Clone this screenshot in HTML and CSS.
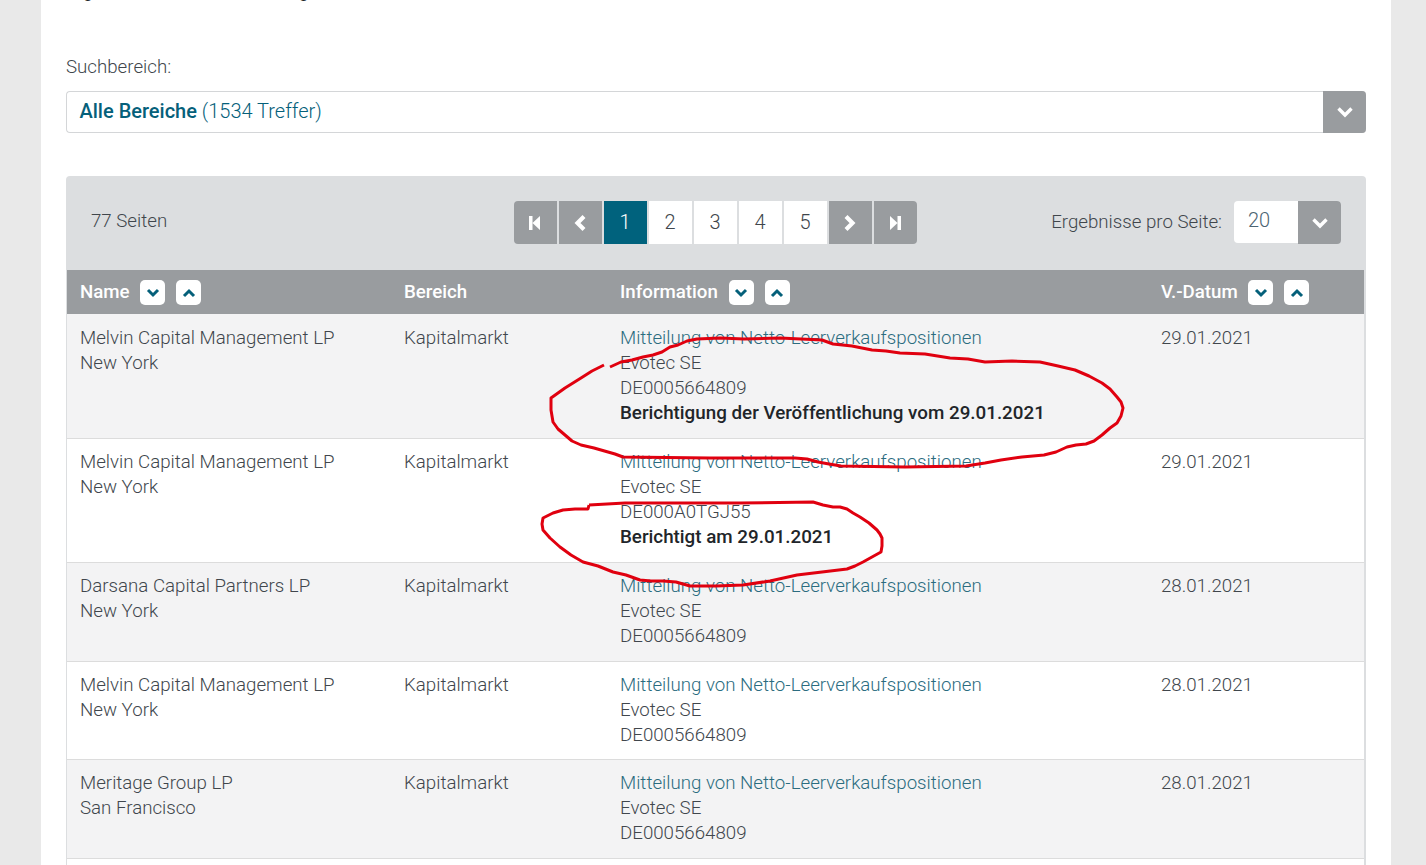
FILE: index.html
```html
<!DOCTYPE html>
<html lang="de">
<head>
<meta charset="utf-8">
<title>Suche</title>
<link rel="stylesheet" href="styles.css">
</head>
<body>
<main class="page">
  <p class="clipped-title">Ergebnisse für Ihren Suchbegriff</p>
  <label class="field-label">Suchbereich:</label>
  <div class="select select-wide">
    <div class="select-value"><strong>Alle Bereiche</strong> (1534 Treffer)</div>
    <div class="select-btn"><svg class="chev-lg" viewBox="0 0 18 12"><path d="M2.500 2.500 9 9l6.500-6.500"/></svg></div>
  </div>

  <section class="panel">
    <div class="toolbar">
      <div class="pages-count">77 Seiten</div>
      <nav class="pager">
        <a class="pg pg-grey pg-first"><svg class="pg-icon" viewBox="0 0 12 14"><path class="fill" d="M0 0h3.500v14H0zM3.500 7 11 0v14z"/></svg></a>
        <a class="pg pg-grey"><svg class="pg-icon" viewBox="0 0 12 18"><path d="M10 2.500 3.500 9l6.500 6.500"/></svg></a>
        <a class="pg pg-active">1</a>
        <a class="pg">2</a>
        <a class="pg">3</a>
        <a class="pg">4</a>
        <a class="pg">5</a>
        <a class="pg pg-grey"><svg class="pg-icon" viewBox="0 0 12 18"><path d="M2 2.500 8.500 9 2 15.500"/></svg></a>
        <a class="pg pg-grey pg-last"><svg class="pg-icon" viewBox="0 0 12 14"><path class="fill" d="M12 0H8.500v14H12zM8.500 7 1 0v14z"/></svg></a>
      </nav>
      <div class="per-page">
        <span>Ergebnisse pro Seite:</span>
        <div class="select select-small">
          <div class="select-value">20</div>
          <div class="select-btn"><svg class="chev-lg" viewBox="0 0 18 12"><path d="M2.500 2.500 9 9l6.500-6.500"/></svg></div>
        </div>
      </div>
    </div>

    <div class="table">
      <div class="row head">
        <div class="cell">Name <span class="sort"><svg viewBox="0 0 14 10"><path d="M2 2l5 5 5-5"/></svg></span><span class="sort"><svg viewBox="0 0 14 10"><path d="M2 8l5-5 5 5"/></svg></span></div>
        <div class="cell">Bereich</div>
        <div class="cell">Information <span class="sort"><svg viewBox="0 0 14 10"><path d="M2 2l5 5 5-5"/></svg></span><span class="sort"><svg viewBox="0 0 14 10"><path d="M2 8l5-5 5 5"/></svg></span></div>
        <div class="cell">V.-Datum <span class="sort"><svg viewBox="0 0 14 10"><path d="M2 2l5 5 5-5"/></svg></span><span class="sort"><svg viewBox="0 0 14 10"><path d="M2 8l5-5 5 5"/></svg></span></div>
      </div>

      <div class="row odd tall">
        <div class="cell">Melvin Capital Management LP<br>New York</div>
        <div class="cell">Kapitalmarkt</div>
        <div class="cell"><a class="link">Mitteilung von Netto-Leerverkaufspositionen</a><br>Evotec SE<br>DE0005664809<br><strong>Berichtigung der Veröffentlichung vom 29.01.2021</strong></div>
        <div class="cell">29.01.2021</div>
      </div>
      <div class="row tall">
        <div class="cell">Melvin Capital Management LP<br>New York</div>
        <div class="cell">Kapitalmarkt</div>
        <div class="cell"><a class="link">Mitteilung von Netto-Leerverkaufspositionen</a><br>Evotec SE<br>DE000A0TGJ55<br><strong>Berichtigt am 29.01.2021</strong></div>
        <div class="cell">29.01.2021</div>
      </div>
      <div class="row odd">
        <div class="cell">Darsana Capital Partners LP<br>New York</div>
        <div class="cell">Kapitalmarkt</div>
        <div class="cell"><a class="link">Mitteilung von Netto-Leerverkaufspositionen</a><br>Evotec SE<br>DE0005664809</div>
        <div class="cell">28.01.2021</div>
      </div>
      <div class="row">
        <div class="cell">Melvin Capital Management LP<br>New York</div>
        <div class="cell">Kapitalmarkt</div>
        <div class="cell"><a class="link">Mitteilung von Netto-Leerverkaufspositionen</a><br>Evotec SE<br>DE0005664809</div>
        <div class="cell">28.01.2021</div>
      </div>
      <div class="row odd">
        <div class="cell">Meritage Group LP<br>San Francisco</div>
        <div class="cell">Kapitalmarkt</div>
        <div class="cell"><a class="link">Mitteilung von Netto-Leerverkaufspositionen</a><br>Evotec SE<br>DE0005664809</div>
        <div class="cell">28.01.2021</div>
      </div>
    </div>
  </section>
</main>

<svg class="scribble" viewBox="0 0 1426 865" aria-hidden="true">
  <path d="M610 367 621 362 632 360 643 357 653 355 662 352 670 347 678 345 687 341 697 339 720 338 744 339 780 338 822 340 833 344 852 346 872 350 886 351 900 353 925 354 950 358 968 359 985 362 1012 361 1040 362 1058 366 1075 370 1089 376 1102 383 1110 389 1117 397 1121 402 1123 408 1121 416 1117 423 1110 428 1102 435 1094 441 1086 444 1076 445 1067 447 1056 452 1044 455 1022 457 1001 460 985 463 966 466 905 467 841 466 829 464 818 462 807 459 795 458 710 458 623 457 615 454 608 452 594 448 581 445 572 441 565 435 558 429 553 422 551 410 551 398 558 393 565 388 573 383 581 378 592 371 604 365"/>
  <path d="M589 505 625 503 663 503 740 503 813 502 823 505 833 507 840 507 847 509 853 513 860 517 869 523 877 530 880 534 882 538 882 546 881 552 872 557 863 562 855 566 847 569 822 572 797 575 770 581 743 585 716 586 690 586 676 582 663 581 651 581 640 580 626 575 613 572 598 566 583 562 571 555 560 547 550 538 543 530 542 524 543 518 553 513 563 510 575 509 588 509 589 505"/>
</svg>
</body>
</html>
```

FILE: styles.css
```css
* { box-sizing: border-box; }

html, body {
  height: 865px;
  overflow: hidden;
}

body {
  margin: 0;
  background: #e9e9e9;
  color: #40464c;
  font-family: Roboto, "Liberation Sans", sans-serif;
  font-size: 18.7px;
  font-weight: 300;
  line-height: 25px;
}

strong { font-weight: 500; }

.page {
  display: flex;
  flex-direction: column;
  width: 1350px;
  height: 865px;
  margin-left: 41px;
  padding: 0 25px;
  background: #fff;
}

.clipped-title {
  margin: -21px 0 0;
  height: 25px;
  font-weight: 400;
  color: #212529;
}

.field-label {
  display: block;
  margin-top: 51px;
  margin-bottom: 11px;
  height: 25px;
}

.select {
  display: flex;
  background: #fff;
  border-radius: 4px;
}

.select-wide {
  flex: none;
  height: 42px;
  border: 1px solid #d4d6d8;
  border-right: 0;
  color: #05607a;
}

.select-wide .select-value {
  flex: 1;
  padding: 7px 13px 7px 12.500px;
  font-size: 20px;
}

.select-btn {
  width: 43px;
  display: flex;
  align-items: center;
  justify-content: center;
  background: #999c9f;
  border-radius: 0 4px 4px 0;
}

.select-wide .select-btn {
  margin: -1px 0;
}

.chev-lg {
  width: 18px;
  height: 12px;
  fill: none;
  stroke: #fff;
  stroke-width: 3.4;
}

.panel {
  flex: 1;
  display: flex;
  flex-direction: column;
  margin-top: 43px;
  background: #dcdee0;
  border-radius: 4px 4px 0 0;
  padding: 0 1px;
}

.toolbar {
  flex: none;
  height: 94px;
  display: grid;
  grid-template-columns: 1fr auto 1fr;
  padding: 25px 24px 0;
}

.pages-count {
  line-height: 40px;
}

.pager {
  display: flex;
  gap: 2px;
  height: 43px;
  margin-left: -2px;
}

.pg {
  width: 43px;
  height: 43px;
  display: flex;
  align-items: center;
  justify-content: center;
  background: #fff;
  font-size: 20px;
}

.pg-grey { background: #999c9f; }
.pg-active { background: #00627d; color: #fff; }
.pg-first { border-radius: 4px 0 0 4px; }
.pg-last { border-radius: 0 4px 4px 0; }

.pg-icon {
  width: 12px;
  height: 18px;
  fill: none;
  stroke: #fff;
  stroke-width: 4.2;
}

.pg-icon .fill {
  fill: #fff;
  stroke: none;
}

.per-page {
  display: flex;
  justify-content: flex-end;
  gap: 12px;
  height: 43px;
  line-height: 42px;
}

.select-small {
  width: 107px;
  height: 42px;
}

.select-small .select-value {
  flex: 1;
  padding-left: 14px;
  font-size: 20px;
  color: #4c6472;
  line-height: 38px;
  border-radius: 4px 0 0 4px;
}

.select-small .select-btn {
  height: 43px;
}

.table {
  flex: 1;
  margin-right: 1px;
  background: #fff;
}

.row {
  display: grid;
  grid-template-columns: 324px 216px 541px 1fr;
  padding: 11px 0 11.67px 13px;
  background: #fff;
  border-bottom: 1px solid #dcdcdc;
}

.row.tall { padding-bottom: 12px; }

.row.odd { background: #f3f3f4; }

.row.head {
  height: 45px;
  padding: 10px 0 0 13px;
  background: #999c9f;
  border-bottom: 1px solid #f3f3f4;
  color: #fff;
  font-weight: 500;
  line-height: 24px;
}

.cell { min-width: 0; }

.sort {
  display: inline-flex;
  align-items: center;
  justify-content: center;
  width: 25px;
  height: 25px;
  margin: 0 0 0 6px;
  vertical-align: top;
  background: #fff;
  border-radius: 5px;
}

.sort + .sort { margin-left: 11px; }

.sort svg {
  width: 14px;
  height: 10px;
  fill: none;
  stroke: #05607a;
  stroke-width: 3;
}

.link { color: #2b6c7f; }

.cell strong {
  color: #212529;
  font-size: 18.8px;
}

.scribble {
  position: absolute;
  left: 0;
  top: 0;
  width: 1426px;
  height: 865px;
  pointer-events: none;
  fill: none;
  stroke: #e0000f;
  stroke-width: 3;
  stroke-linejoin: round;
}
```
